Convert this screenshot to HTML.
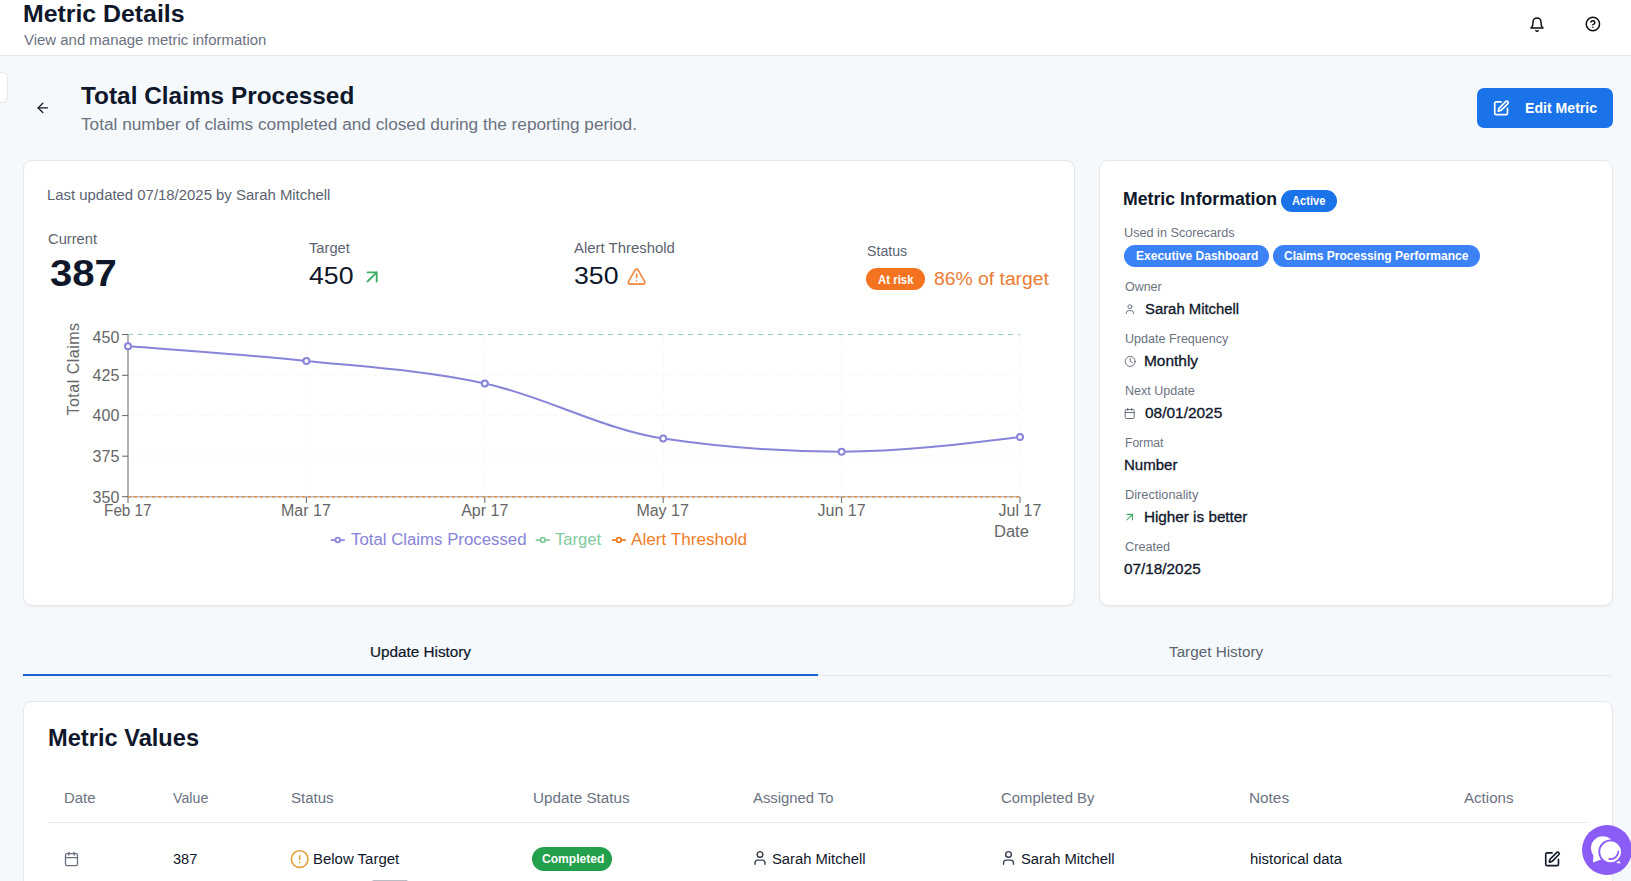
<!DOCTYPE html>
<html><head><meta charset="utf-8">
<style>
*{box-sizing:border-box;margin:0;padding:0}
html,body{width:1631px;height:881px;overflow:hidden;background:#f5f9fc;font-family:"Liberation Sans",sans-serif}
.t{position:absolute;white-space:nowrap;font-family:"Liberation Sans",sans-serif}
.box{position:absolute}
#hdr{left:0;top:0;width:1631px;height:56px;background:#fff;border-bottom:1px solid #e5e7eb}
#stub{left:-8px;top:72px;width:16px;height:31px;background:#fff;border:1px solid #e5e7eb;border-radius:6px}
#btn{left:1477px;top:88px;width:136px;height:40px;background:#1a73e8;border-radius:7px}
.card{position:absolute;background:#fff;border:1px solid #e5e7eb;border-radius:9px;box-shadow:0 1px 2px rgba(0,0,0,0.05)}
#c1{left:23px;top:160px;width:1052px;height:446px}
#c2{left:1099px;top:160px;width:514px;height:446px}
#c3{left:23px;top:701px;width:1590px;height:240px}
.pill{position:absolute;border-radius:999px}
#risk{left:866px;top:268px;width:59px;height:22px;background:#f47321}
#act{left:1281px;top:190px;width:56px;height:22px;background:#1a73e8}
#p1{left:1124px;top:245px;width:145px;height:22px;background:#3b82f6}
#p2{left:1273px;top:245px;width:207px;height:22px;background:#3b82f6}
#done{left:532px;top:847px;width:80px;height:24px;background:#22a04b}
#tabline{left:23px;top:675px;width:1589px;height:1px;background:#e5e7eb}
#tabact{left:23px;top:674px;width:795px;height:2px;background:#1a66d0}
#tline{left:48px;top:822px;width:1539px;height:1px;background:#e5e7eb}
#gbar{left:372px;top:880px;width:36px;height:3px;background:#b8bcc2;border-radius:2px}
#chat{left:1582px;top:825px;width:50px;height:50px;background:#8b5cf6;border-radius:50%}
svg{position:absolute;left:0;top:0}
</style></head><body>
<div class="box" id="hdr"></div>
<div class="box" id="stub"></div>
<div class="box" id="btn"></div>
<div class="card" id="c1"></div>
<div class="card" id="c2"></div>
<div class="card" id="c3"></div>
<div class="pill" id="risk"></div>
<div class="pill" id="act"></div>
<div class="pill" id="p1"></div>
<div class="pill" id="p2"></div>
<div class="pill" id="done"></div>
<div class="box" id="tabline"></div>
<div class="box" id="tabact"></div>
<div class="box" id="tline"></div>
<div class="box" id="gbar"></div>
<svg width="1631" height="881" viewBox="0 0 1631 881"><line x1="128" y1="375.3" x2="1020" y2="375.3" stroke="#f6f6f6" stroke-dasharray="3 3"/><line x1="128" y1="415.6" x2="1020" y2="415.6" stroke="#f6f6f6" stroke-dasharray="3 3"/><line x1="128" y1="456.2" x2="1020" y2="456.2" stroke="#f6f6f6" stroke-dasharray="3 3"/><line x1="306.4" y1="334.5" x2="306.4" y2="496.7" stroke="#f6f6f6" stroke-dasharray="3 3"/><line x1="484.8" y1="334.5" x2="484.8" y2="496.7" stroke="#f6f6f6" stroke-dasharray="3 3"/><line x1="663.2" y1="334.5" x2="663.2" y2="496.7" stroke="#f6f6f6" stroke-dasharray="3 3"/><line x1="841.6" y1="334.5" x2="841.6" y2="496.7" stroke="#f6f6f6" stroke-dasharray="3 3"/><line x1="1020" y1="334.5" x2="1020" y2="496.7" stroke="#f6f6f6" stroke-dasharray="3 3"/><line x1="128" y1="334" x2="128" y2="497" stroke="#666" stroke-width="1"/><line x1="122" y1="334.5" x2="128" y2="334.5" stroke="#666"/><line x1="122" y1="375.3" x2="128" y2="375.3" stroke="#666"/><line x1="122" y1="415.6" x2="128" y2="415.6" stroke="#666"/><line x1="122" y1="456.2" x2="128" y2="456.2" stroke="#666"/><line x1="122" y1="496.7" x2="128" y2="496.7" stroke="#666"/><line x1="128" y1="497" x2="128" y2="503" stroke="#666"/><line x1="306.4" y1="497" x2="306.4" y2="503" stroke="#666"/><line x1="484.8" y1="497" x2="484.8" y2="503" stroke="#666"/><line x1="663.2" y1="497" x2="663.2" y2="503" stroke="#666"/><line x1="841.6" y1="497" x2="841.6" y2="503" stroke="#666"/><line x1="1020" y1="497" x2="1020" y2="503" stroke="#666"/><line x1="128" y1="334.5" x2="1020" y2="334.5" stroke="#92cfb0" stroke-width="1.2" stroke-dasharray="5 5"/><line x1="128" y1="496.8" x2="1020" y2="496.8" stroke="#999" stroke-width="1"/><line x1="128" y1="496.8" x2="1020" y2="496.8" stroke="#e8873a" stroke-width="1.2" stroke-dasharray="3 3"/><path d="M128.00,346.20C187.47,350.45,246.93,354.70,306.40,360.90C365.87,367.10,425.33,370.47,484.80,383.40C544.27,396.33,603.73,429.70,663.20,438.50C722.67,447.30,782.13,451.70,841.60,451.70C901.07,451.70,960.53,444.35,1020.00,437.00" fill="none" stroke="#8884d8" stroke-width="2"/><circle cx="128" cy="346.2" r="3" fill="#fff" stroke="#8884d8" stroke-width="2"/><circle cx="306.4" cy="360.9" r="3" fill="#fff" stroke="#8884d8" stroke-width="2"/><circle cx="484.8" cy="383.4" r="3" fill="#fff" stroke="#8884d8" stroke-width="2"/><circle cx="663.2" cy="438.5" r="3" fill="#fff" stroke="#8884d8" stroke-width="2"/><circle cx="841.6" cy="451.7" r="3" fill="#fff" stroke="#8884d8" stroke-width="2"/><circle cx="1020" cy="437" r="3" fill="#fff" stroke="#8884d8" stroke-width="2"/><text x="0" y="0" transform="translate(78.8,369) rotate(-90)" text-anchor="middle" font-family="Liberation Sans" font-size="16" fill="#666" letter-spacing="0.5">Total Claims</text><g transform="translate(330.8,533) scale(0.4375)"><path d="M0,16h10.666666666666666A5.333333333333333,5.333333333333333,0,1,1,21.333333333333332,16H32M21.333333333333332,16A5.333333333333333,5.333333333333333,0,1,1,10.666666666666666,16" fill="none" stroke="#8884d8" stroke-width="4"/></g><g transform="translate(535.8,533) scale(0.4375)"><path d="M0,16h10.666666666666666A5.333333333333333,5.333333333333333,0,1,1,21.333333333333332,16H32M21.333333333333332,16A5.333333333333333,5.333333333333333,0,1,1,10.666666666666666,16" fill="none" stroke="#82ca9d" stroke-width="4"/></g><g transform="translate(611.9,533) scale(0.4375)"><path d="M0,16h10.666666666666666A5.333333333333333,5.333333333333333,0,1,1,21.333333333333332,16H32M21.333333333333332,16A5.333333333333333,5.333333333333333,0,1,1,10.666666666666666,16" fill="none" stroke="#ee7d2a" stroke-width="4"/></g><g transform="translate(1529,16.6) scale(0.6667)" fill="none" stroke="#0a0a0a" stroke-width="2.2" stroke-linecap="round" stroke-linejoin="round" ><path d="M6 8a6 6 0 0 1 12 0c0 7 3 9 3 9H3s3-2 3-9"/><path d="M10.3 21a1.94 1.94 0 0 0 3.4 0"/></g><g transform="translate(1584.9,16) scale(0.6667)" fill="none" stroke="#0a0a0a" stroke-width="2.2" stroke-linecap="round" stroke-linejoin="round" ><circle cx="12" cy="12" r="10"/><path d="M9.09 9a3 3 0 0 1 5.83 1c0 2-3 3-3 3"/><path d="M12 17h.01"/></g><g transform="translate(34.8,99.9) scale(0.6667)" fill="none" stroke="#111827" stroke-width="2" stroke-linecap="round" stroke-linejoin="round" ><path d="m12 19-7-7 7-7"/><path d="M19 12H5"/></g><g transform="translate(1492.6,99.8) scale(0.7083)" fill="none" stroke="#ffffff" stroke-width="2.4" stroke-linecap="round" stroke-linejoin="round" ><path d="M12 3H5a2 2 0 0 0-2 2v14a2 2 0 0 0 2 2h14a2 2 0 0 0 2-2v-7"/><path d="M18.375 2.625a1 1 0 0 1 3 3l-9.013 9.014a2 2 0 0 1-.853.505l-2.873.84a.5.5 0 0 1-.62-.62l.84-2.873a2 2 0 0 1 .506-.852z"/></g><g transform="translate(361.1,265.9) scale(0.9167)" fill="none" stroke="#3fae63" stroke-width="2" stroke-linecap="round" stroke-linejoin="round" ><path d="M7 7h10v10"/><path d="M7 17 17 7"/></g><g transform="translate(626.6,266.6) scale(0.8333)" fill="none" stroke="#f0883e" stroke-width="2" stroke-linecap="round" stroke-linejoin="round" ><path d="m21.73 18-8-14a2 2 0 0 0-3.48 0l-8 14A2 2 0 0 0 4 21h16a2 2 0 0 0 1.73-3"/><path d="M12 9v4"/><path d="M12 17h.01"/></g><g transform="translate(1123.9,303.2) scale(0.5000)" fill="none" stroke="#6b7280" stroke-width="2" stroke-linecap="round" stroke-linejoin="round" ><path d="M19 21v-2a4 4 0 0 0-4-4H9a4 4 0 0 0-4 4v2"/><circle cx="12" cy="7" r="4"/></g><g transform="translate(1124.2,355.4) scale(0.5000)" fill="none" stroke="#6b7280" stroke-width="2" stroke-linecap="round" stroke-linejoin="round" ><circle cx="12" cy="12" r="10"/><path d="M12 6v6l4 2"/></g><g transform="translate(1123.7,407.5) scale(0.5000)" fill="none" stroke="#6b7280" stroke-width="2" stroke-linecap="round" stroke-linejoin="round" ><path d="M8 2v4"/><path d="M16 2v4"/><rect width="18" height="18" x="3" y="4" rx="2"/><path d="M3 10h18"/></g><g transform="translate(1123.2,510.6) scale(0.5417)" fill="none" stroke="#45b06c" stroke-width="2.2" stroke-linecap="round" stroke-linejoin="round" ><path d="M7 7h10v10"/><path d="M7 17 17 7"/></g><g transform="translate(63.5,851) scale(0.6667)" fill="none" stroke="#6b7280" stroke-width="2" stroke-linecap="round" stroke-linejoin="round" ><path d="M8 2v4"/><path d="M16 2v4"/><rect width="18" height="18" x="3" y="4" rx="2"/><path d="M3 10h18"/></g><g transform="translate(289.7,849.1) scale(0.8333)" fill="none" stroke="#e5a13a" stroke-width="2" stroke-linecap="round" stroke-linejoin="round" ><circle cx="12" cy="12" r="10"/><path d="M12 8v4"/><path d="M12 16h.01"/></g><g transform="translate(751.5,849.5) scale(0.7083)" fill="none" stroke="#374151" stroke-width="2" stroke-linecap="round" stroke-linejoin="round" ><path d="M19 21v-2a4 4 0 0 0-4-4H9a4 4 0 0 0-4 4v2"/><circle cx="12" cy="7" r="4"/></g><g transform="translate(1000,849.5) scale(0.7083)" fill="none" stroke="#374151" stroke-width="2" stroke-linecap="round" stroke-linejoin="round" ><path d="M19 21v-2a4 4 0 0 0-4-4H9a4 4 0 0 0-4 4v2"/><circle cx="12" cy="7" r="4"/></g><g transform="translate(1543.6,850.8) scale(0.7083)" fill="none" stroke="#111827" stroke-width="2.3" stroke-linecap="round" stroke-linejoin="round" ><path d="M12 3H5a2 2 0 0 0-2 2v14a2 2 0 0 0 2 2h14a2 2 0 0 0 2-2v-7"/><path d="M18.375 2.625a1 1 0 0 1 3 3l-9.013 9.014a2 2 0 0 1-.853.505l-2.873.84a.5.5 0 0 1-.62-.62l.84-2.873a2 2 0 0 1 .506-.852z"/></g></svg>
<div class="t" style="left:22.8px;top:2.8px;font-size:23px;line-height:23px;font-weight:700;color:#0f172a;transform-origin:1.00px 0;transform:scaleX(1.0808);">Metric Details</div>
<div class="t" style="left:23.8px;top:32.6px;font-size:14px;line-height:14px;font-weight:400;color:#6b7280;transform-origin:0.00px 0;transform:scaleX(1.0677);">View and manage metric information</div>
<div class="t" style="left:80.6px;top:83.9px;font-size:24px;line-height:24px;font-weight:700;color:#0f172a;transform-origin:0.00px 0;transform:scaleX(1.0159);">Total Claims Processed</div>
<div class="t" style="left:80.6px;top:116.8px;font-size:16px;line-height:16px;font-weight:400;color:#6b7280;transform-origin:0.00px 0;transform:scaleX(1.0759);">Total number of claims completed and closed during the reporting period.</div>
<div class="t" style="left:1524.7px;top:101.0px;font-size:14px;line-height:14px;font-weight:700;color:#ffffff;transform-origin:0.00px 0;transform:scaleX(1.0073);">Edit Metric</div>
<div class="t" style="left:47.4px;top:188.0px;font-size:14px;line-height:14px;font-weight:400;color:#5b6370;transform-origin:1.00px 0;transform:scaleX(1.0650);">Last updated 07/18/2025 by Sarah Mitchell</div>
<div class="t" style="left:48.4px;top:232.0px;font-size:14px;line-height:14px;font-weight:400;color:#5b6370;transform-origin:0.00px 0;transform:scaleX(1.0514);">Current</div>
<div class="t" style="left:49.8px;top:256.0px;font-size:36px;line-height:36px;font-weight:700;color:#0f172a;transform-origin:0.00px 0;transform:scaleX(1.1144);">387</div>
<div class="t" style="left:309.3px;top:240.6px;font-size:14px;line-height:14px;font-weight:400;color:#5b6370;transform-origin:0.00px 0;transform:scaleX(1.0507);">Target</div>
<div class="t" style="left:309.3px;top:264.4px;font-size:24px;line-height:24px;font-weight:400;color:#0f172a;transform-origin:0.00px 0;transform:scaleX(1.1135);">450</div>
<div class="t" style="left:574.2px;top:240.6px;font-size:14px;line-height:14px;font-weight:400;color:#5b6370;transform-origin:0.00px 0;transform:scaleX(1.0654);">Alert Threshold</div>
<div class="t" style="left:574.2px;top:264.4px;font-size:24px;line-height:24px;font-weight:400;color:#0f172a;transform-origin:0.00px 0;transform:scaleX(1.1110);">350</div>
<div class="t" style="left:866.9px;top:243.9px;font-size:14px;line-height:14px;font-weight:400;color:#5b6370;transform-origin:0.00px 0;transform:scaleX(1.0129);">Status</div>
<div class="t" style="left:877.9px;top:273.5px;font-size:12px;line-height:12px;font-weight:700;color:#ffffff;transform-origin:0.00px 0;transform:scaleX(0.9503);">At risk</div>
<div class="t" style="left:934.2px;top:270.0px;font-size:18px;line-height:18px;font-weight:400;color:#ea7c35;transform-origin:0.00px 0;transform:scaleX(1.0732);">86% of target</div>
<div class="t" style="left:92.6px;top:329.8px;font-size:16px;line-height:16px;font-weight:400;color:#666666;transform-origin:0.00px 0;transform:scaleX(1.0000);">450</div>
<div class="t" style="left:92.6px;top:367.6px;font-size:16px;line-height:16px;font-weight:400;color:#666666;transform-origin:0.00px 0;transform:scaleX(1.0000);">425</div>
<div class="t" style="left:92.6px;top:407.9px;font-size:16px;line-height:16px;font-weight:400;color:#666666;transform-origin:0.00px 0;transform:scaleX(1.0000);">400</div>
<div class="t" style="left:92.6px;top:448.5px;font-size:16px;line-height:16px;font-weight:400;color:#666666;transform-origin:0.00px 0;transform:scaleX(1.0000);">375</div>
<div class="t" style="left:92.6px;top:489.5px;font-size:16px;line-height:16px;font-weight:400;color:#666666;transform-origin:0.00px 0;transform:scaleX(1.0000);">350</div>
<div class="t" style="left:103.7px;top:502.7px;font-size:16px;line-height:16px;font-weight:400;color:#666666;transform-origin:1.00px 0;transform:scaleX(0.9547);">Feb 17</div>
<div class="t" style="left:281.0px;top:502.7px;font-size:16px;line-height:16px;font-weight:400;color:#666666;transform-origin:1.00px 0;transform:scaleX(1.0000);">Mar 17</div>
<div class="t" style="left:461.2px;top:502.7px;font-size:16px;line-height:16px;font-weight:400;color:#666666;transform-origin:0.00px 0;transform:scaleX(1.0000);">Apr 17</div>
<div class="t" style="left:636.4px;top:502.7px;font-size:16px;line-height:16px;font-weight:400;color:#666666;transform-origin:1.00px 0;transform:scaleX(1.0000);">May 17</div>
<div class="t" style="left:817.5px;top:502.7px;font-size:16px;line-height:16px;font-weight:400;color:#666666;transform-origin:0.00px 0;transform:scaleX(1.0000);">Jun 17</div>
<div class="t" style="left:998.6px;top:502.7px;font-size:16px;line-height:16px;font-weight:400;color:#666666;transform-origin:0.00px 0;transform:scaleX(1.0000);">Jul 17</div>
<div class="t" style="left:994.4px;top:524.2px;font-size:16px;line-height:16px;font-weight:400;color:#666666;transform-origin:1.00px 0;transform:scaleX(1.0335);">Date</div>
<div class="t" style="left:351.0px;top:531.8px;font-size:16px;line-height:16px;font-weight:400;color:#8884d8;transform-origin:0.00px 0;transform:scaleX(1.0501);">Total Claims Processed</div>
<div class="t" style="left:555.2px;top:531.8px;font-size:16px;line-height:16px;font-weight:400;color:#82ca9d;transform-origin:0.00px 0;transform:scaleX(1.0372);">Target</div>
<div class="t" style="left:630.8px;top:531.8px;font-size:16px;line-height:16px;font-weight:400;color:#ee7d2a;transform-origin:0.00px 0;transform:scaleX(1.0726);">Alert Threshold</div>
<div class="t" style="left:1123.3px;top:190.0px;font-size:18px;line-height:18px;font-weight:700;color:#0f172a;transform-origin:1.00px 0;transform:scaleX(0.9812);">Metric Information</div>
<div class="t" style="left:1292.3px;top:194.5px;font-size:12px;line-height:12px;font-weight:700;color:#ffffff;transform-origin:0.00px 0;transform:scaleX(0.9273);">Active</div>
<div class="t" style="left:1124.3px;top:227.2px;font-size:12px;line-height:12px;font-weight:400;color:#6b7280;transform-origin:0.00px 0;transform:scaleX(1.0562);">Used in Scorecards</div>
<div class="t" style="left:1135.5px;top:249.5px;font-size:12px;line-height:12px;font-weight:700;color:#ffffff;transform-origin:0.00px 0;transform:scaleX(1.0023);">Executive Dashboard</div>
<div class="t" style="left:1284.0px;top:249.5px;font-size:12px;line-height:12px;font-weight:700;color:#ffffff;transform-origin:0.00px 0;transform:scaleX(1.0021);">Claims Processing Performance</div>
<div class="t" style="left:1124.5px;top:281.3px;font-size:12px;line-height:12px;font-weight:400;color:#6b7280;transform-origin:0.00px 0;transform:scaleX(1.0383);">Owner</div>
<div class="t" style="left:1144.8px;top:302.0px;font-size:14px;line-height:14px;font-weight:400;color:#0f172a;transform-origin:0.00px 0;transform:scaleX(1.0610);-webkit-text-stroke:0.3px #0f172a;">Sarah Mitchell</div>
<div class="t" style="left:1124.5px;top:333.3px;font-size:12px;line-height:12px;font-weight:400;color:#6b7280;transform-origin:0.00px 0;transform:scaleX(1.0474);">Update Frequency</div>
<div class="t" style="left:1143.8px;top:354.0px;font-size:14px;line-height:14px;font-weight:400;color:#0f172a;transform-origin:1.00px 0;transform:scaleX(1.1058);-webkit-text-stroke:0.3px #0f172a;">Monthly</div>
<div class="t" style="left:1124.5px;top:385.3px;font-size:12px;line-height:12px;font-weight:400;color:#6b7280;transform-origin:0.00px 0;transform:scaleX(1.0443);">Next Update</div>
<div class="t" style="left:1144.8px;top:406.0px;font-size:14px;line-height:14px;font-weight:400;color:#0f172a;transform-origin:0.00px 0;transform:scaleX(1.1027);-webkit-text-stroke:0.3px #0f172a;">08/01/2025</div>
<div class="t" style="left:1124.5px;top:437.3px;font-size:12px;line-height:12px;font-weight:400;color:#6b7280;transform-origin:0.00px 0;transform:scaleX(1.0085);">Format</div>
<div class="t" style="left:1123.7px;top:458.0px;font-size:14px;line-height:14px;font-weight:400;color:#0f172a;transform-origin:1.00px 0;transform:scaleX(1.0747);-webkit-text-stroke:0.3px #0f172a;">Number</div>
<div class="t" style="left:1124.5px;top:489.3px;font-size:12px;line-height:12px;font-weight:400;color:#6b7280;transform-origin:0.00px 0;transform:scaleX(1.0671);">Directionality</div>
<div class="t" style="left:1143.7px;top:510.0px;font-size:14px;line-height:14px;font-weight:400;color:#0f172a;transform-origin:1.00px 0;transform:scaleX(1.0905);-webkit-text-stroke:0.3px #0f172a;">Higher is better</div>
<div class="t" style="left:1124.5px;top:541.3px;font-size:12px;line-height:12px;font-weight:400;color:#6b7280;transform-origin:0.00px 0;transform:scaleX(1.0567);">Created</div>
<div class="t" style="left:1124.2px;top:562.0px;font-size:14px;line-height:14px;font-weight:400;color:#0f172a;transform-origin:0.00px 0;transform:scaleX(1.0942);-webkit-text-stroke:0.3px #0f172a;">07/18/2025</div>
<div class="t" style="left:369.7px;top:644.7px;font-size:14px;line-height:14px;font-weight:400;color:#0f172a;transform-origin:1.00px 0;transform:scaleX(1.0918);-webkit-text-stroke:0.2px #0f172a;">Update History</div>
<div class="t" style="left:1168.7px;top:644.7px;font-size:14px;line-height:14px;font-weight:400;color:#5b6370;transform-origin:0.00px 0;transform:scaleX(1.0896);">Target History</div>
<div class="t" style="left:48.1px;top:725.7px;font-size:24px;line-height:24px;font-weight:700;color:#0f172a;transform-origin:1.00px 0;transform:scaleX(0.9845);">Metric Values</div>
<div class="t" style="left:63.5px;top:791.0px;font-size:14px;line-height:14px;font-weight:400;color:#6b7280;transform-origin:1.00px 0;transform:scaleX(1.0665);">Date</div>
<div class="t" style="left:173.3px;top:791.0px;font-size:14px;line-height:14px;font-weight:400;color:#6b7280;transform-origin:0.00px 0;transform:scaleX(1.0148);">Value</div>
<div class="t" style="left:290.5px;top:791.0px;font-size:14px;line-height:14px;font-weight:400;color:#6b7280;transform-origin:0.00px 0;transform:scaleX(1.0733);">Status</div>
<div class="t" style="left:532.6px;top:791.0px;font-size:14px;line-height:14px;font-weight:400;color:#6b7280;transform-origin:1.00px 0;transform:scaleX(1.0909);">Update Status</div>
<div class="t" style="left:752.5px;top:791.0px;font-size:14px;line-height:14px;font-weight:400;color:#6b7280;transform-origin:0.00px 0;transform:scaleX(1.0591);">Assigned To</div>
<div class="t" style="left:1001.2px;top:791.0px;font-size:14px;line-height:14px;font-weight:400;color:#6b7280;transform-origin:0.00px 0;transform:scaleX(1.0622);">Completed By</div>
<div class="t" style="left:1249.3px;top:791.0px;font-size:14px;line-height:14px;font-weight:400;color:#6b7280;transform-origin:1.00px 0;transform:scaleX(1.0992);">Notes</div>
<div class="t" style="left:1463.8px;top:791.0px;font-size:14px;line-height:14px;font-weight:400;color:#6b7280;transform-origin:0.00px 0;transform:scaleX(1.0782);">Actions</div>
<div class="t" style="left:173.3px;top:851.7px;font-size:14px;line-height:14px;font-weight:400;color:#0f172a;transform-origin:0.00px 0;transform:scaleX(1.0394);">387</div>
<div class="t" style="left:313.4px;top:851.7px;font-size:14px;line-height:14px;font-weight:400;color:#0f172a;transform-origin:1.00px 0;transform:scaleX(1.0695);">Below Target</div>
<div class="t" style="left:541.5px;top:853.0px;font-size:12px;line-height:12px;font-weight:700;color:#ffffff;transform-origin:0.00px 0;transform:scaleX(1.0053);">Completed</div>
<div class="t" style="left:772.0px;top:851.7px;font-size:14px;line-height:14px;font-weight:400;color:#0f172a;transform-origin:0.00px 0;transform:scaleX(1.0554);">Sarah Mitchell</div>
<div class="t" style="left:1021.1px;top:851.7px;font-size:14px;line-height:14px;font-weight:400;color:#0f172a;transform-origin:0.00px 0;transform:scaleX(1.0543);">Sarah Mitchell</div>
<div class="t" style="left:1250.3px;top:851.7px;font-size:14px;line-height:14px;font-weight:400;color:#0f172a;transform-origin:0.00px 0;transform:scaleX(1.0648);">historical data</div>
<div class="box" id="chat"></div>
<svg width="1631" height="881" viewBox="0 0 1631 881"><circle cx="1602.8" cy="848" r="11.8" fill="#fff"/><path d="M1593.5 854 L1593 862.5 L1601 859.5 Z" fill="#fff"/><path d="M1617 857 L1620.8 863.4 L1611 862.5 Z" fill="#fff"/><circle cx="1610.6" cy="851.8" r="11.4" fill="#fff" stroke="#8b5cf6" stroke-width="1.8"/><path d="M1618.4 851.5 A7.8 7.8 0 0 1 1609.4 859" fill="none" stroke="#8b5cf6" stroke-width="1.8" stroke-linecap="round"/></svg>
</body></html>
